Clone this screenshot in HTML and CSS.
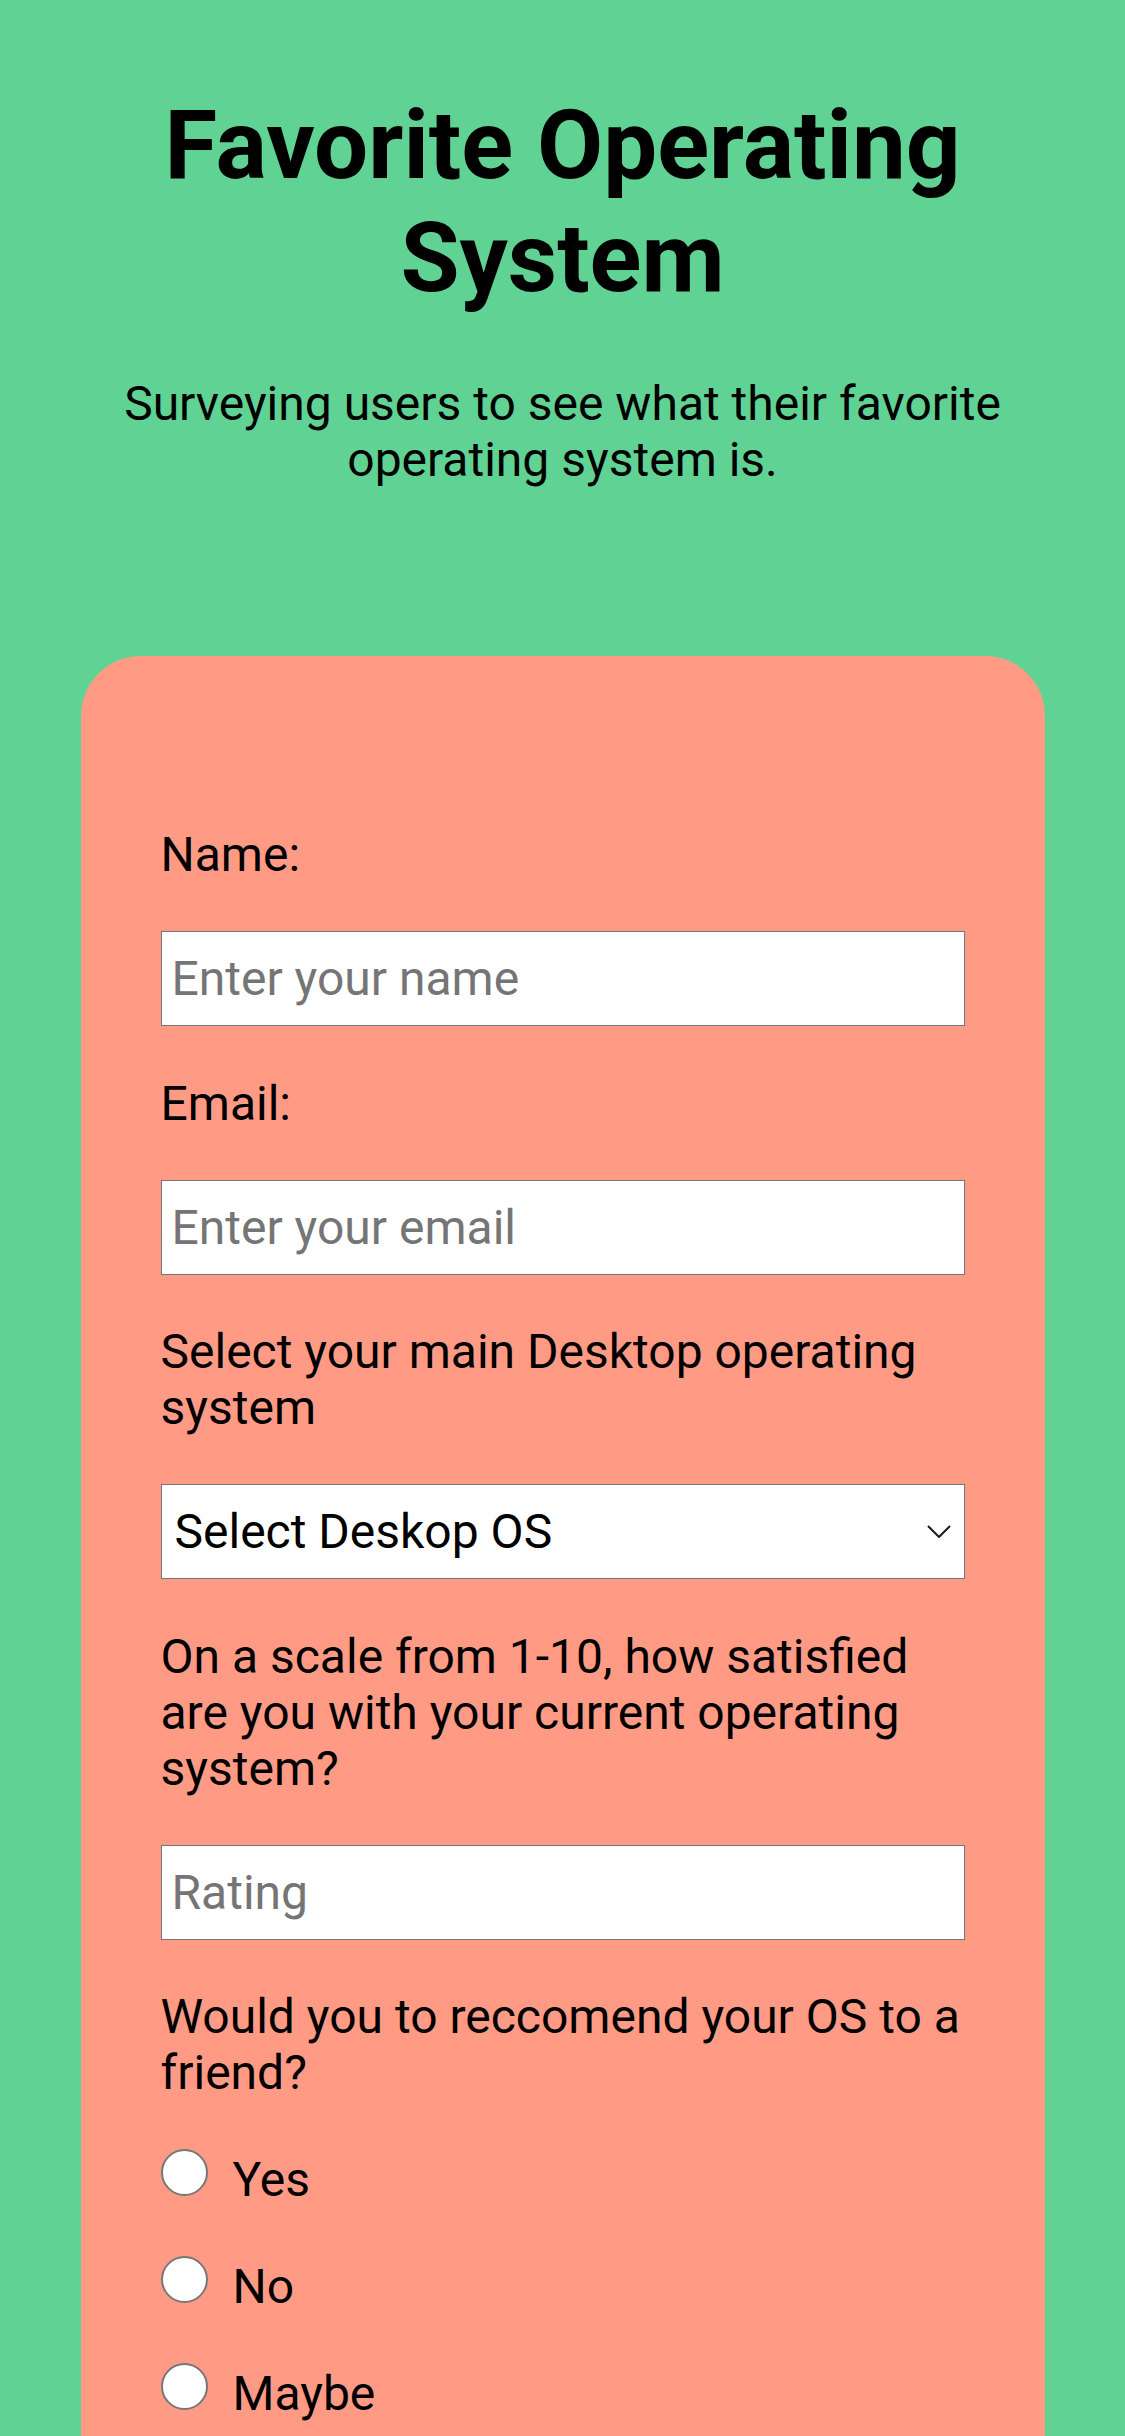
FILE: index.html
```html
<!DOCTYPE html>
<html lang="en">
<head>
<meta charset="utf-8">
<title>Favorite Operating System</title>
<link rel="stylesheet" href="styles.css">
</head>
<body>
<header class="header">
  <h1 class="title">Favorite Operating System</h1>
  <p class="description">Surveying users to see what their favorite operating system is.</p>
</header>
<form class="survey">
  <div class="field">
    <label class="label" for="name">Name:</label>
    <input class="control" id="name" type="text" placeholder="Enter your name">
  </div>
  <div class="field">
    <label class="label" for="email">Email:</label>
    <input class="control" id="email" type="email" placeholder="Enter your email">
  </div>
  <div class="field">
    <label class="label" for="os">Select your main Desktop operating system</label>
    <div class="select-wrap">
      <select class="control select" id="os">
        <option>Select Deskop OS</option>
        <option>Windows</option>
        <option>macOS</option>
        <option>Linux</option>
      </select>
      <svg class="chevron" viewBox="0 0 24 13" width="24" height="13" aria-hidden="true"><path d="M1 1 L12 12 L23 1" fill="none" stroke="#1a1a1a" stroke-width="2"/></svg>
    </div>
  </div>
  <div class="field">
    <label class="label" for="rating">On a scale from 1-10, how satisfied are you with your current operating system?</label>
    <input class="control" id="rating" type="number" placeholder="Rating">
  </div>
  <div class="field">
    <p class="label">Would you to reccomend your OS to a friend?</p>
    <div class="options">
      <label class="option"><input class="radio" type="radio" name="recommend" value="yes"><span class="option-text">Yes</span></label>
      <label class="option"><input class="radio" type="radio" name="recommend" value="no"><span class="option-text">No</span></label>
      <label class="option"><input class="radio" type="radio" name="recommend" value="maybe"><span class="option-text">Maybe</span></label>
    </div>
  </div>
</form>
</body>
</html>
```
FILE: styles.css
```css
* { box-sizing: border-box; }
body {
  margin: 0;
  background: #60d394;
  font-family: "Roboto", "Noto Sans", sans-serif;
  color: #000;
}
.header {
  padding: 89px 60px 0;
  text-align: center;
}
.title {
  margin: 0;
  font-size: 96px;
  line-height: 113px;
  font-weight: 700;
}
.description {
  margin: 61px 0 0;
  font-size: 48px;
  line-height: 56px;
}
.survey {
  margin: 168px 80px 0 80.5px;
  padding: 171px 80px 120px;
  background: #ff9b85;
  border-radius: 60px 60px 0 0;
}
.field {
  display: flex;
  flex-direction: column;
  margin-bottom: 49.5px;
}
.label {
  margin: 0 0 48px;
  font-size: 48px;
  line-height: 56px;
}
.control {
  height: 95px;
  width: 100%;
  border: 1px solid #767676;
  background: #fff;
  padding: 0 10px;
  font-family: inherit;
  font-size: 48px;
  color: #000;
  border-radius: 0;
}
.control::placeholder { color: #757575; }
.select-wrap { position: relative; }
.select {
  appearance: none;
  -webkit-appearance: none;
  padding: 0 13px;
}
.chevron {
  position: absolute;
  right: 14px;
  top: 41px;
}
.options {
  display: flex;
  flex-direction: column;
  gap: 60px;
}
.option {
  display: flex;
  align-items: flex-end;
  gap: 25px;
  font-size: 48px;
}
.option-text {
  line-height: 33px;
}
.radio {
  appearance: none;
  -webkit-appearance: none;
  margin: 0;
  width: 47px;
  height: 47px;
  border: 2px solid #777;
  border-radius: 50%;
  background: #fff;
  flex: none;
}
```
